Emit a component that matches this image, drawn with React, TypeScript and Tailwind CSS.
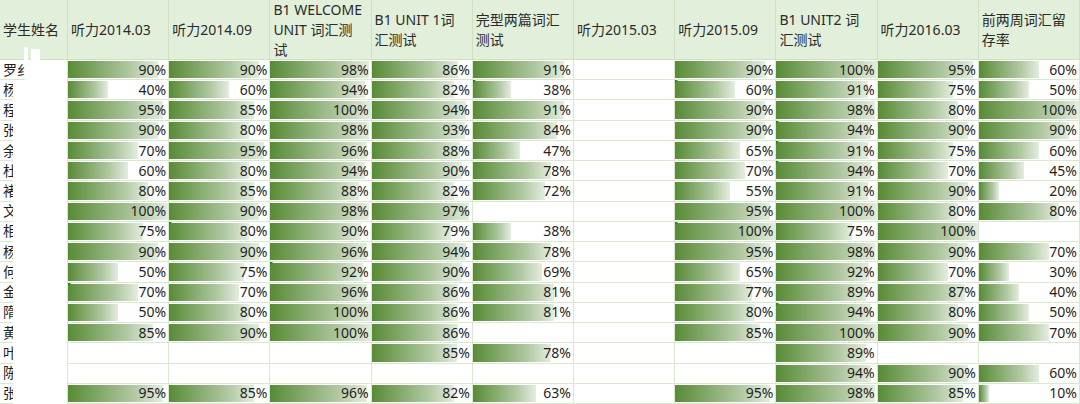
import React from "react";

type Row = { name: string; mask: number; v: (number | null)[] };

const headers: string[][] = [
  ["听力2014.03"],
  ["听力2014.09"],
  ["B1 WELCOME", "UNIT 词汇测", "试"],
  ["B1 UNIT 1词", "汇测试"],
  ["完型两篇词汇", "测试"],
  ["听力2015.03"],
  ["听力2015.09"],
  ["B1 UNIT2 词", "汇测试"],
  ["听力2016.03"],
  ["前两周词汇留", "存率"],
];

const N = null;
const rows: Row[] = [
  { name: "罗纟", mask: 25, v: [90, 90, 98, 86, 91, N, 90, 100, 95, 60] },
  { name: "杨", mask: 13, v: [40, 60, 94, 82, 38, N, 60, 91, 75, 50] },
  { name: "程", mask: 13, v: [95, 85, 100, 94, 91, N, 90, 98, 80, 100] },
  { name: "张", mask: 13, v: [90, 80, 98, 93, 84, N, 90, 94, 90, 90] },
  { name: "余", mask: 13, v: [70, 95, 96, 88, 47, N, 65, 91, 75, 60] },
  { name: "杜", mask: 13, v: [60, 80, 94, 90, 78, N, 70, 94, 70, 45] },
  { name: "褚", mask: 13, v: [80, 85, 88, 82, 72, N, 55, 91, 90, 20] },
  { name: "文", mask: 13, v: [100, 90, 98, 97, N, N, 95, 100, 80, 80] },
  { name: "相", mask: 13, v: [75, 80, 90, 79, 38, N, 100, 75, 100, N] },
  { name: "杨", mask: 13, v: [90, 90, 96, 94, 78, N, 95, 98, 90, 70] },
  { name: "何", mask: 13, v: [50, 75, 92, 90, 69, N, 65, 92, 70, 30] },
  { name: "金", mask: 13, v: [70, 70, 96, 86, 81, N, 77, 89, 87, 40] },
  { name: "隋", mask: 13, v: [50, 80, 100, 86, 81, N, 80, 94, 80, 50] },
  { name: "黄", mask: 13, v: [85, 90, 100, 86, N, N, 85, 100, 90, 70] },
  { name: "叶", mask: 13, v: [N, N, N, 85, 78, N, N, 89, N, N] },
  { name: "陈", mask: 13, v: [N, N, N, N, N, N, N, 94, 90, 60] },
  { name: "张", mask: 13, v: [95, 85, 96, 82, 63, N, 95, 98, 85, 10] },
];

// cells with green error triangles: row index - column index
const flags = new Set(["1-4", "1-6", "3-7", "4-7", "5-7", "12-7", "11-0", "10-2", "8-1", "8-6"]);

export default function App() {
  return (
    <div
      className="w-[1080px] h-[404px] overflow-hidden bg-white text-[14px] text-[#1f1f1f]"
      style={{ fontFamily: '"Noto Sans", "Noto Sans CJK SC", sans-serif' }}
    >
      <div className="grid h-[404px] w-[1080px] grid-cols-[68px_repeat(10,1fr)] grid-rows-[60px_repeat(17,1fr)]">
        {/* header */}
        <div className="relative flex items-center border-b border-r border-[#cfe1c2] bg-[#e2efda] pl-[3px] leading-[20px] text-[#2b2b2b]">
          学生姓名
          <div className="absolute left-[24px] top-[47px] h-[14px] w-[4px] bg-white" />
          <div className="absolute left-[31px] top-[49px] h-[12px] w-[9px] bg-white" />
        </div>
        {headers.map((h, i) => (
          <div
            key={i}
            className="flex flex-col justify-center border-b border-r border-[#cfe1c2] bg-[#e2efda] pl-[3px] leading-[20px] text-[#2b2b2b] whitespace-nowrap"
          >
            {h.map((l, j) => (
              <span key={j}>{l}</span>
            ))}
          </div>
        ))}
        {rows.map((r, ri) => (
          <React.Fragment key={ri}>
            <div className="relative flex items-center border-b border-r border-[#d9e8cf] pl-[3px] leading-none">
              <span className="whitespace-nowrap">{r.name}</span>
              <div
                className="absolute right-0 top-0 bottom-[-1px] bg-white"
                style={{ left: r.mask }}
              />
            </div>
            {r.v.map((v, ci) => (
              <div
                key={ci}
                className="relative flex items-center justify-end border-b border-r border-[#d9e8cf] pr-[2px] leading-none"
              >
                {v !== null && (
                  <>
                    <div
                      className="absolute left-0 top-[1px] bottom-[1px] bg-[linear-gradient(to_right,#588b36,#b2c9a4_70%,#e4ede0)]"
                      style={{ width: `${v}%` }}
                    />
                    <span className="relative">{v}%</span>
                  </>
                )}
                {flags.has(`${ri}-${ci}`) && (
                  <div className="absolute left-0 top-0 h-0 w-0 border-r-[3px] border-t-[3px] border-r-transparent border-t-[#1e8a1e]" />
                )}
              </div>
            ))}
          </React.Fragment>
        ))}
      </div>
    </div>
  );
}
